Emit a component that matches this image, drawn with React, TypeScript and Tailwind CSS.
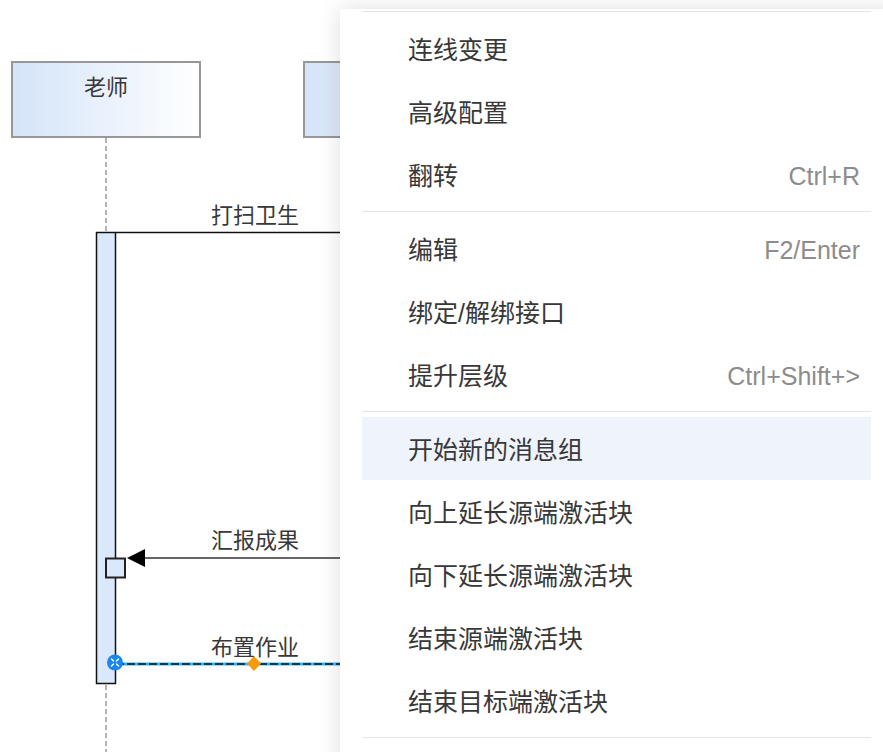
import React from "react";

type Item = { label: string; shortcut?: string; active?: boolean };

const groups: Item[][] = [
  [
    { label: "连线变更" },
    { label: "高级配置" },
    { label: "翻转", shortcut: "Ctrl+R" },
  ],
  [
    { label: "编辑", shortcut: "F2/Enter" },
    { label: "绑定/解绑接口" },
    { label: "提升层级", shortcut: "Ctrl+Shift+>" },
  ],
  [
    { label: "开始新的消息组", active: true },
    { label: "向上延长源端激活块" },
    { label: "向下延长源端激活块" },
    { label: "结束源端激活块" },
    { label: "结束目标端激活块" },
  ],
];

function Separator() {
  return (
    <div className="py-[5px]">
      <div className="h-px bg-[#e3e5ea]" />
    </div>
  );
}

function Label({ text, cx, cy }: { text: string; cx: number; cy: number }) {
  return (
    <div
      className="absolute w-[140px] text-center text-[22px] leading-[24px] text-[#383838]"
      style={{ left: cx - 70, top: cy - 12 }}
    >
      {text}
    </div>
  );
}

export default function App() {
  return (
    <div
      className="relative w-[883px] h-[752px] overflow-hidden bg-white"
      style={{ fontFamily: '"Liberation Sans", "Noto Sans CJK SC", sans-serif' }}
    >
      {/* diagram canvas */}
      <svg className="absolute left-0 top-0" width="883" height="752">
        <defs>
          <linearGradient id="boxg" x1="0" y1="0" x2="1" y2="0">
            <stop offset="0" stopColor="#d4e4f9" />
            <stop offset="1" stopColor="#ffffff" />
          </linearGradient>
        </defs>
        <rect x="12" y="62" width="188" height="75" fill="url(#boxg)" stroke="#979797" strokeWidth="2" />
        <rect x="304" y="62" width="188" height="75" fill="url(#boxg)" stroke="#979797" strokeWidth="2" />
        <line x1="106" y1="138" x2="106" y2="232" stroke="#9a9a9a" strokeWidth="1.5" strokeDasharray="5 3" />
        <line x1="106" y1="685" x2="106" y2="752" stroke="#9a9a9a" strokeWidth="1.5" strokeDasharray="5 3" />
        <rect x="96.5" y="232.5" width="19" height="451" fill="#dae8fc" stroke="#111" strokeWidth="1.5" />
        <line x1="116" y1="232.5" x2="345" y2="232.5" stroke="#111" strokeWidth="1.5" />
        <line x1="143" y1="558" x2="345" y2="558" stroke="#333" strokeWidth="1.5" />
        <polygon points="127,558 145,549 145,567" fill="#000" />
        <rect x="106" y="558.5" width="19" height="19" fill="#dae8fc" stroke="#222" strokeWidth="2" />
        <line x1="116" y1="664" x2="345" y2="664" stroke="#35b4f5" strokeWidth="3" />
        <line x1="116" y1="664" x2="345" y2="664" stroke="#111" strokeWidth="1.3" strokeDasharray="8 3" />
        <circle cx="115" cy="662.5" r="8" fill="#1a86f2" />
        <path d="M111.5 659 L113.5 661 M118.5 659 L116.5 661 M111.5 666 L113.5 664 M118.5 666 L116.5 664" stroke="#fff" strokeWidth="1.4" strokeLinecap="round" />
        <polygon points="254,656 261,663.5 254,671 247,663.5" fill="#f59b0c" />
      </svg>

      <Label text="老师" cx={106} cy={88} />
      <Label text="打扫卫生" cx={255} cy={216} />
      <Label text="汇报成果" cx={255} cy={541} />
      <Label text="布置作业" cx={255} cy={648} />

      {/* context menu */}
      <div className="absolute left-[340px] top-[9px] w-[560px] h-[800px] bg-white shadow-[0_0_22px_rgba(0,0,0,0.13)]">
        <div className="pl-[22px] pr-[29px] pt-[2px]">
          <div className="h-px bg-[#e3e5ea] mb-[5px]" />
          {groups.map((g, gi) => (
            <div key={gi}>
              {gi > 0 && <Separator />}
              {g.map((it) => (
                <div
                  key={it.label}
                  className={`flex h-[63px] items-center justify-between pl-[46px] pr-[11px] pt-[4px] ${
                    it.active ? "bg-[#eff3fc]" : ""
                  }`}
                >
                  <span className="text-[25px] text-[#383838]">{it.label}</span>
                  {it.shortcut && (
                    <span className="text-[25px] text-[#8c8c8c]">{it.shortcut}</span>
                  )}
                </div>
              ))}
            </div>
          ))}
          <Separator />
        </div>
      </div>
    </div>
  );
}
